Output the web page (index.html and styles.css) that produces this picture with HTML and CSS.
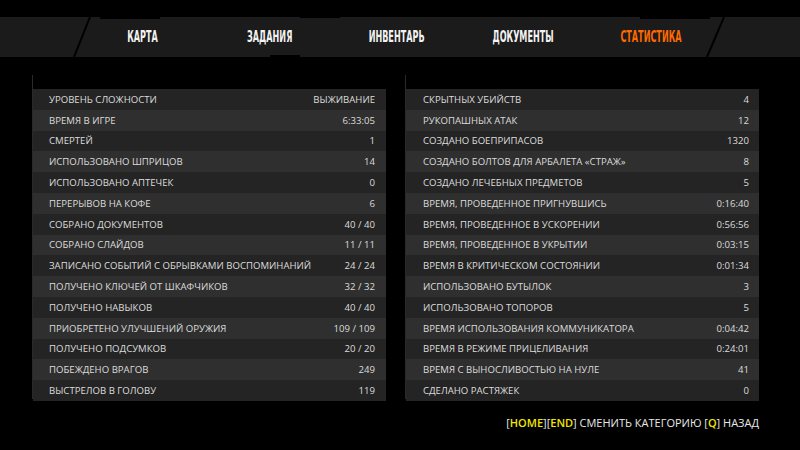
FILE: index.html
```html
<!DOCTYPE html>
<html lang="ru">
<head>
    <meta charset="UTF-8">
    <title>Статистика</title>
    <link rel="stylesheet" href="styles.css">
</head>
<body>
    <header class="tabs">
        <!-- косые разделители по краям вкладок -->
        <svg class="tabs-cuts" width="800" height="40" viewBox="0 0 800 40">
            <line x1="90" y1="0" x2="74" y2="40" stroke="#000" stroke-width="2"/>
            <line x1="724" y1="0" x2="707" y2="40" stroke="#000" stroke-width="2"/>
            <path d="M100 0 h60 v2 h-60z M300 0 h40 v1 h-40z M640 0 h70 v2 h-70z M270 38 h30 v2 h-30z" fill="#000"/>
        </svg>
        <nav class="tab-list">
            <span class="tab"><span class="tab-text">КАРТА</span></span>
            <span class="tab"><span class="tab-text">ЗАДАНИЯ</span></span>
            <span class="tab"><span class="tab-text">ИНВЕНТАРЬ</span></span>
            <span class="tab"><span class="tab-text">ДОКУМЕНТЫ</span></span>
            <span class="tab active"><span class="tab-text">СТАТИСТИКА</span></span>
        </nav>
    </header>

    <main class="stats">
        <section class="panel">
            <div class="row"><span>УРОВЕНЬ СЛОЖНОСТИ</span><span class="val">ВЫЖИВАНИЕ</span></div>
            <div class="row"><span>ВРЕМЯ В ИГРЕ</span><span class="val">6:33:05</span></div>
            <div class="row"><span>СМЕРТЕЙ</span><span class="val">1</span></div>
            <div class="row"><span>ИСПОЛЬЗОВАНО ШПРИЦОВ</span><span class="val">14</span></div>
            <div class="row"><span>ИСПОЛЬЗОВАНО АПТЕЧЕК</span><span class="val">0</span></div>
            <div class="row"><span>ПЕРЕРЫВОВ НА КОФЕ</span><span class="val">6</span></div>
            <div class="row"><span>СОБРАНО ДОКУМЕНТОВ</span><span class="val">40 / 40</span></div>
            <div class="row"><span>СОБРАНО СЛАЙДОВ</span><span class="val">11 / 11</span></div>
            <div class="row"><span>ЗАПИСАНО СОБЫТИЙ С ОБРЫВКАМИ ВОСПОМИНАНИЙ</span><span class="val">24 / 24</span></div>
            <div class="row"><span>ПОЛУЧЕНО КЛЮЧЕЙ ОТ ШКАФЧИКОВ</span><span class="val">32 / 32</span></div>
            <div class="row"><span>ПОЛУЧЕНО НАВЫКОВ</span><span class="val">40 / 40</span></div>
            <div class="row"><span>ПРИОБРЕТЕНО УЛУЧШЕНИЙ ОРУЖИЯ</span><span class="val">109 / 109</span></div>
            <div class="row"><span>ПОЛУЧЕНО ПОДСУМКОВ</span><span class="val">20 / 20</span></div>
            <div class="row"><span>ПОБЕЖДЕНО ВРАГОВ</span><span class="val">249</span></div>
            <div class="row"><span>ВЫСТРЕЛОВ В ГОЛОВУ</span><span class="val">119</span></div>
        </section>

        <section class="panel panel-right">
            <div class="row"><span>СКРЫТНЫХ УБИЙСТВ</span><span class="val">4</span></div>
            <div class="row"><span>РУКОПАШНЫХ АТАК</span><span class="val">12</span></div>
            <div class="row"><span>СОЗДАНО БОЕПРИПАСОВ</span><span class="val">1320</span></div>
            <div class="row"><span>СОЗДАНО БОЛТОВ ДЛЯ АРБАЛЕТА «СТРАЖ»</span><span class="val">8</span></div>
            <div class="row"><span>СОЗДАНО ЛЕЧЕБНЫХ ПРЕДМЕТОВ</span><span class="val">5</span></div>
            <div class="row"><span>ВРЕМЯ, ПРОВЕДЕННОЕ ПРИГНУВШИСЬ</span><span class="val">0:16:40</span></div>
            <div class="row"><span>ВРЕМЯ, ПРОВЕДЕННОЕ В УСКОРЕНИИ</span><span class="val">0:56:56</span></div>
            <div class="row"><span>ВРЕМЯ, ПРОВЕДЕННОЕ В УКРЫТИИ</span><span class="val">0:03:15</span></div>
            <div class="row"><span>ВРЕМЯ В КРИТИЧЕСКОМ СОСТОЯНИИ</span><span class="val">0:01:34</span></div>
            <div class="row"><span>ИСПОЛЬЗОВАНО БУТЫЛОК</span><span class="val">3</span></div>
            <div class="row"><span>ИСПОЛЬЗОВАНО ТОПОРОВ</span><span class="val">5</span></div>
            <div class="row"><span>ВРЕМЯ ИСПОЛЬЗОВАНИЯ КОММУНИКАТОРА</span><span class="val">0:04:42</span></div>
            <div class="row"><span>ВРЕМЯ В РЕЖИМЕ ПРИЦЕЛИВАНИЯ</span><span class="val">0:24:01</span></div>
            <div class="row"><span>ВРЕМЯ С ВЫНОСЛИВОСТЬЮ НА НУЛЕ</span><span class="val">41</span></div>
            <div class="row"><span>СДЕЛАНО РАСТЯЖЕК</span><span class="val">0</span></div>
        </section>
    </main>

    <footer class="hint">
        [<b class="key">HOME</b>][<b class="key">END</b>] СМЕНИТЬ КАТЕГОРИЮ [<b class="key">Q</b>] НАЗАД
    </footer>
</body>
</html>
```

FILE: styles.css
```css
/* Сброс */
body, nav, main, section, header, footer {
    margin: 0;
    padding: 0;
    box-sizing: border-box;
}

body {
    width: 800px;
    height: 450px;
    background: #000;
    color: #dcdcdc;
    font-family: 'Open Sans', sans-serif;
    overflow: hidden;
}

/* Вкладки сверху */
.tabs {
    position: relative;
    margin-top: 17px;
    height: 40px;
    background: #1b1b1b;
}

.tabs-cuts {
    position: absolute;
    top: 0;
    left: 0;
}

.tab-list {
    display: flex;
    padding-left: 79px;
    height: 40px;
    align-items: center;
}

.tab {
    width: 127px;
    text-align: center;
    color: #f2f2f2;
    font-family: 'DejaVu Sans', sans-serif;
    font-stretch: condensed;
    font-weight: bold;
    font-size: 15px;
    line-height: 40px;
}

.tab-text {
    display: inline-block;
    transform: scaleX(0.6);
}

.tab.active {
    color: #ff6a00;
}

/* Таблицы статистики */
.stats {
    display: flex;
    gap: 20px;
    padding: 32px 0 0 33px;
}

.panel {
    position: relative;
    width: 353px;
}

/* тонкая линия слева от таблицы */
.panel::before {
    content: '';
    position: absolute;
    left: -1px;
    top: -14px;
    bottom: 2px;
    width: 1px;
    background: #2a2a2a;
}

.row {
    display: flex;
    justify-content: space-between;
    align-items: center;
    height: 20.8px;
    padding: 0 11px 0 16px;
    font-size: 9.6px;
    background: #242424;
}

.row:nth-child(even) {
    background: #2f2f2f;
}

.panel-right .row {
    padding: 0 10px 0 17px;
}

.val {
    font-variant-numeric: tabular-nums;
}

/* Подсказка по клавишам */
.hint {
    margin-top: 14px;
    padding-right: 41px;
    text-align: right;
    font-size: 11px;
    line-height: 16px;
    color: #e8e8e8;
}

.key {
    color: #f2e600;
    font-weight: 600;
}
```
